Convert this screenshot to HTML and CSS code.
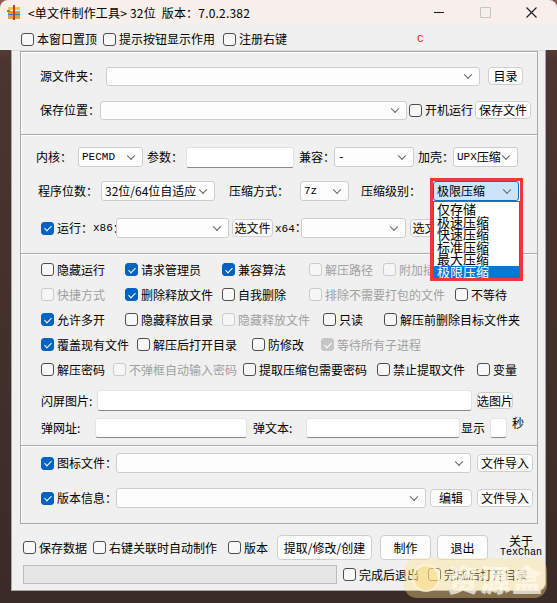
FILE: index.html
```html
<!DOCTYPE html>
<html lang="zh-CN">
<head>
<meta charset="utf-8">
<title>单文件制作工具</title>
<link rel="stylesheet" href="styles.css">
</head>
<body>
<div class="window">
  <div class="titlebar">
    <svg class="appicon" width="14" height="15" viewBox="0 0 14 15">
      <rect x="1" y="2" width="12" height="3" fill="#f3c64f"/>
      <rect x="1" y="6" width="12" height="3" fill="#e8923a"/>
      <rect x="1" y="10" width="12" height="4" fill="#d8a443"/>
      <rect x="1" y="9" width="12" height="1" fill="#3d7bd6"/>
      <rect x="6" y="0" width="2" height="15" fill="#c43d2c"/>
      <rect x="0" y="5" width="3" height="2" fill="#4aa24a"/>
    </svg>
    <span class="title">&lt;单文件制作工具&gt; 32位&nbsp; 版本：7.0.2.382</span>
    <div class="controls">
      <span class="ctl"><i class="min"></i></span>
      <span class="ctl"><i class="max"></i></span>
      <span class="ctl"><svg width="11" height="11" viewBox="0 0 11 11"><path d="M0.5 0.5L10.5 10.5M10.5 0.5L0.5 10.5" stroke="#1a1a1a" stroke-width="1.1"/></svg></span>
    </div>
  </div>

  <div class="toprow">
    <label class="cb w82"><i></i>本窗口置顶</label>
    <label class="cb w120"><i></i>提示按钮显示作用</label>
    <label class="cb w194"><i></i>注册右键</label>
    <span class="mark">C</span>
  </div>

  <div class="main">
    <div class="grp g1">
      <div class="row r-src">
        <span class="lbl w66">源文件夹：</span>
        <div class="combo h19 w374"></div>
        <button class="btn w35 ml8">目录</button>
      </div>
      <div class="row r-save">
        <span class="lbl w60">保存位置：</span>
        <div class="combo h19 w307"></div>
        <label class="cb ml2 w66"><i></i>开机运行</label>
        <button class="btn w56">保存文件</button>
      </div>
    </div>

    <div class="grp g2">
      <div class="row r-core">
        <span class="lbl w42">内核：</span>
        <div class="combo w65"><span class="mono">PECMD</span></div>
        <span class="lbl ml4 w39">参数：</span>
        <div class="input w108"></div>
        <span class="lbl ml5 w35">兼容：</span>
        <div class="combo w80"><span class="mono">-</span></div>
        <span class="lbl ml4 w35">加壳：</span>
        <div class="combo w65"><span class="mono">UPX</span>压缩</div>
      </div>
      <div class="row r-bits">
        <span class="lbl w63">程序位数：</span>
        <div class="combo w114">32位/64位自适应</div>
        <span class="lbl ml14 w71">压缩方式：</span>
        <div class="combo w49"><span class="mono">7z</span></div>
        <span class="lbl ml12 w72">压缩级别：</span>
        <div class="combo sel w86">极限压缩</div>
      </div>
      <div class="row r-run">
        <label class="cb on w75"><i></i>运行：<span class="mono">x86</span>：</label>
        <div class="combo w113"></div>
        <button class="btn ml3 w41">选文件</button>
        <span class="lbl ml2 w26"><span class="mono">x64</span>：</span>
        <div class="combo w105"></div>
        <button class="btn ml4 w41">选文件</button>
      </div>
      <div class="sep"></div>
      <div class="checks">
        <div class="crow">
          <label class="cb w84"><i></i>隐藏运行</label>
          <label class="cb on w97"><i></i>请求管理员</label>
          <label class="cb on w87"><i></i>兼容算法</label>
          <label class="cb off w74"><i></i>解压路径</label>
          <label class="cb off"><i></i>附加插件</label>
        </div>
        <div class="crow">
          <label class="cb off w84"><i></i>快捷方式</label>
          <label class="cb on w97"><i></i>删除释放文件</label>
          <label class="cb w87"><i></i>自我删除</label>
          <label class="cb off w146"><i></i>排除不需要打包的文件</label>
          <label class="cb"><i></i>不等待</label>
        </div>
        <div class="crow">
          <label class="cb on w84"><i></i>允许多开</label>
          <label class="cb w97"><i></i>隐藏释放目录</label>
          <label class="cb off w101"><i></i>隐藏释放文件</label>
          <label class="cb w61"><i></i>只读</label>
          <label class="cb"><i></i>解压前删除目标文件夹</label>
        </div>
        <div class="crow">
          <label class="cb on w96"><i></i>覆盖现有文件</label>
          <label class="cb w115"><i></i>解压后打开目录</label>
          <label class="cb w69"><i></i>防修改</label>
          <label class="cb off on"><i></i>等待所有子进程</label>
        </div>
        <div class="crow">
          <label class="cb w72"><i></i>解压密码</label>
          <label class="cb off w130"><i></i>不弹框自动输入密码</label>
          <label class="cb w134"><i></i>提取压缩包需要密码</label>
          <label class="cb w100"><i></i>禁止提取文件</label>
          <label class="cb"><i></i>变量</label>
        </div>
      </div>
      <div class="row r-splash">
        <span class="lbl w56">闪屏图片:</span>
        <div class="input w375"></div>
        <button class="btn ml5 w36 h17">选图片</button>
      </div>
      <div class="row r-url">
        <span class="lbl w54">弹网址:</span>
        <div class="input h20 w152"></div>
        <span class="lbl ml6 w53">弹文本:</span>
        <div class="input h20 w154"></div>
        <span class="lbl ml1 w29">显示</span>
        <div class="input h20 w17"></div>
        <span class="lbl ml5 sec">秒</span>
      </div>
    </div>

    <div class="grp g3">
      <div class="row r-icon">
        <label class="cb on w75"><i></i>图标文件：</label>
        <div class="combo w355"></div>
        <button class="btn ml6 w56">文件导入</button>
      </div>
      <div class="row r-ver">
        <label class="cb on w75"><i></i>版本信息：</label>
        <div class="combo w310"></div>
        <button class="btn ml4 w42">编辑</button>
        <button class="btn ml5 w56">文件导入</button>
      </div>
    </div>

    <div class="row r-bottom">
      <label class="cb w70"><i></i>保存数据</label>
      <label class="cb w135"><i></i>右键关联时自动制作</label>
      <label class="cb w49"><i></i>版本</label>
      <button class="btn big w95">提取/修改/创建</button>
      <button class="btn big ml8 w51">制作</button>
      <button class="btn big ml6 w51">退出</button>
      <div class="about">
        <span>关于</span>
        <span class="tex">TexChan</span>
      </div>
    </div>
    <div class="row r-progress">
      <div class="progress"></div>
      <label class="cb ml6 w85"><i></i>完成后退出</label>
      <label class="cb"><i></i>完成后打开目录</label>
    </div>
  </div>

  <div class="droplist">
    <div class="item">仅存储</div>
    <div class="item">极速压缩</div>
    <div class="item">快速压缩</div>
    <div class="item">标准压缩</div>
    <div class="item">最大压缩</div>
    <div class="item cur">极限压缩</div>
  </div>
  <div class="redframe"></div>

  <div class="wm">
    <span class="wm-logo"></span>
    <span class="wm-text">资源盒</span>
  </div>
</div>
</body>
</html>
```

FILE: styles.css
```css
html, body {
  margin: 0;
  padding: 0;
  width: 557px;
  height: 603px;
  overflow: hidden;
}
body {
  background: linear-gradient(180deg, #8d5b50 0, #4b3530 60px, #3a2b27 100%);
  font-family: "Noto Sans CJK SC", "Noto Sans", sans-serif;
  font-size: 12px;
  line-height: 16px;
  color: #000;
}
.window {
  position: relative;
  width: 557px;
  height: 603px;
}

/* title bar */
.titlebar {
  height: 25px;
  background: #f7efeb;
  border-radius: 8px 8px 0 0;
  display: flex;
  align-items: center;
}
.appicon {
  margin-left: 7px;
  flex: none;
}
.title {
  margin-left: 7px;
  font-size: 12px;
  letter-spacing: 0.2px;
  white-space: nowrap;
}
.controls {
  margin-left: auto;
  margin-right: 3px;
  display: flex;
}
.ctl {
  width: 46px;
  height: 25px;
  display: flex;
  align-items: center;
  justify-content: center;
}
.ctl .min {
  width: 10px;
  height: 1px;
  background: #1a1a1a;
}
.ctl .max {
  width: 9px;
  height: 9px;
  border: 1px solid #c4c4c4;
  border-radius: 1px;
}

/* top options row */
.toprow {
  height: 25px;
  box-sizing: border-box;
  padding: 3px 0 0 21px;
  background: #f0f0f0;
  display: flex;
  align-items: center;
}
.mark {
  font-family: "Liberation Mono", monospace;
  font-size: 11px;
  color: #ff1010;
}

/* main client panel */
.main {
  margin-left: 11px;
  width: 535px;
  height: 541px;
  box-sizing: border-box;
  border: 1px solid #a7a7a7;
  border-top-color: #dcdcdc;
  border-radius: 0 0 8px 0;
  background: #f0f0f0;
  padding: 0 7px 0 8px;
}
.grp {
  box-sizing: border-box;
  border: 1px solid #a9a9a9;
  box-shadow: inset 1px 1px 0 #ffffff;
}
.g1 { height: 84px; }
.g2 { height: 312px; margin-top: -1px; }
.g3 { height: 79px; margin-top: -1px; }

.row {
  display: flex;
  align-items: center;
}
.r-src { margin-top: 14px; height: 20px; padding-left: 19px; }
.r-save { margin-top: 14px; height: 20px; padding-left: 19px; }
.r-core { margin-top: 12px; height: 20px; padding-left: 15px; }
.r-bits { margin-top: 14px; height: 20px; padding-left: 17px; }
.r-run { margin-top: 17px; height: 20px; padding-left: 20px; }
.r-splash { margin-top: 8px; height: 21px; padding-left: 20px; }
.r-url { margin-top: 7px; height: 20px; padding-left: 20px; }
.r-icon { margin-top: 7px; height: 20px; padding-left: 20px; }
.r-ver { margin-top: 15px; height: 20px; padding-left: 20px; }
.r-bottom { margin-top: 11px; height: 25px; padding-left: 3px; }
.r-progress { margin-top: 5px; height: 19px; padding-left: 3px; }

.sep {
  margin-top: 15px;
  border-top: 1px solid #a9a9a9;
  border-bottom: 1px solid #ffffff;
}
.checks {
  margin-top: 2px;
  padding-left: 20px;
}
.crow {
  height: 25px;
  display: flex;
  align-items: center;
}

.lbl {
  flex: none;
  white-space: nowrap;
}
.sec {
  align-self: flex-start;
  margin-top: -3px;
}
.mono {
  font-family: "Liberation Mono", "DejaVu Sans Mono", monospace;
  font-size: 11px;
}

/* checkbox */
.cb {
  display: flex;
  align-items: center;
  flex: none;
  white-space: nowrap;
}
.cb i {
  position: relative;
  flex: none;
  width: 13px;
  height: 13px;
  box-sizing: border-box;
  margin-right: 3px;
  border: 1px solid #4e4e4e;
  border-radius: 3px;
  background: #f8f8f8;
}
.cb.on i {
  background: #0062c1;
  border-color: #0062c1;
}
.cb.on i::after {
  content: "";
  position: absolute;
  left: 3.5px;
  top: 1.5px;
  width: 3px;
  height: 6px;
  border-right: 1.3px solid #fff;
  border-bottom: 1.3px solid #fff;
  transform: rotate(45deg);
}
.cb.off {
  color: #a0a0a0;
}
.cb.off i {
  border-color: #cbcbcb;
  background: #f6f6f6;
}
.cb.off.on i {
  background: #c6c6c6;
  border-color: #c6c6c6;
}

/* combo box */
.combo {
  position: relative;
  flex: none;
  height: 20px;
  box-sizing: border-box;
  border: 1px solid #cdcdcd;
  border-radius: 3px;
  background: #fdfdfd;
  display: flex;
  align-items: center;
  padding-left: 3px;
  white-space: nowrap;
}
.combo::after {
  content: "";
  position: absolute;
  right: 8px;
  top: 50%;
  width: 5px;
  height: 5px;
  border-right: 1px solid #666;
  border-bottom: 1px solid #666;
  transform: translateY(-70%) rotate(45deg);
}
.combo.h19 { height: 19px; }
.combo.sel {
  background: #cce4f7;
  border-color: #0b6fc8;
}

/* text box */
.input {
  flex: none;
  height: 21px;
  box-sizing: border-box;
  background: #ffffff;
  border: 1px solid #e4e4e4;
  border-bottom-color: #8a8a8a;
  border-radius: 3px;
}
.input.h20 { height: 20px; }

/* button */
.btn {
  flex: none;
  height: 18px;
  box-sizing: border-box;
  margin: 0;
  padding: 0;
  border: 1px solid #cfcfcf;
  border-radius: 4px;
  background: #fdfdfd;
  font: inherit;
  color: #000;
  display: flex;
  align-items: center;
  justify-content: center;
  white-space: nowrap;
}
.btn.h17 { height: 17px; }
.btn.big { height: 25px; }

.about {
  flex: none;
  margin-left: 8px;
  width: 50px;
  display: flex;
  flex-direction: column;
  align-items: center;
  line-height: 12px;
  margin-top: -1px;
}
.about .tex {
  font-family: "Liberation Mono", monospace;
  font-size: 10px;
}

.progress {
  flex: none;
  width: 314px;
  height: 19px;
  box-sizing: border-box;
  border: 1px solid #bcbcbc;
  background: #e6e6e6;
}

/* dropdown overlay */
.droplist {
  position: absolute;
  left: 433px;
  top: 201px;
  width: 87px;
  height: 77px;
  box-sizing: border-box;
  background: #ffffff;
  border: 1px solid #646464;
  padding-top: 1px;
  font-size: 13px;
}
.droplist .item {
  height: 12.5px;
  line-height: 12.5px;
  padding-left: 3px;
  white-space: nowrap;
}
.droplist .item.cur {
  background: #0078d7;
  color: #fff;
}
.redframe {
  position: absolute;
  left: 430px;
  top: 178px;
  width: 93px;
  height: 103px;
  box-sizing: border-box;
  border: 3px solid #f03838;
}

/* watermark overlay */
.wm {
  position: absolute;
  left: 404px;
  top: 558px;
  width: 143px;
  height: 40px;
  box-sizing: border-box;
  border-radius: 13px;
  background: rgba(255, 226, 140, 0.38);
  display: flex;
  align-items: center;
  padding-left: 8px;
}
.wm-logo {
  width: 24px;
  height: 24px;
  border-radius: 50%;
  border: 2px solid rgba(255, 255, 255, 0.6);
  background: rgba(250, 215, 120, 0.5);
  flex: none;
}
.wm-text {
  margin-left: 8px;
  font-size: 30px;
  line-height: 38px;
  font-weight: 900;
  letter-spacing: 2px;
  color: rgba(255, 251, 238, 0.72);
}

/* widths and spacings */
.w17 { width: 17px; } .w26 { width: 26px; } .w29 { width: 29px; }
.w35 { width: 35px; } .w36 { width: 36px; } .w39 { width: 39px; }
.w41 { width: 41px; } .w42 { width: 42px; } .w49 { width: 49px; }
.w51 { width: 51px; } .w53 { width: 53px; } .w54 { width: 54px; }
.w56 { width: 56px; } .w60 { width: 60px; } .w61 { width: 61px; }
.w63 { width: 63px; } .w65 { width: 65px; } .w66 { width: 66px; }
.w69 { width: 69px; } .w70 { width: 70px; } .w71 { width: 71px; }
.w72 { width: 72px; } .w74 { width: 74px; } .w75 { width: 75px; }
.w80 { width: 80px; } .w82 { width: 82px; } .w84 { width: 84px; }
.w85 { width: 85px; } .w86 { width: 86px; } .w87 { width: 87px; }
.w95 { width: 95px; } .w96 { width: 96px; } .w97 { width: 97px; }
.w100 { width: 100px; } .w101 { width: 101px; } .w105 { width: 105px; }
.w108 { width: 108px; } .w113 { width: 113px; } .w114 { width: 114px; }
.w115 { width: 115px; } .w120 { width: 120px; } .w130 { width: 130px; }
.w134 { width: 134px; } .w135 { width: 135px; } .w146 { width: 146px; }
.w152 { width: 152px; } .w154 { width: 154px; } .w194 { width: 194px; }
.w307 { width: 307px; } .w310 { width: 310px; } .w355 { width: 355px; }
.w374 { width: 374px; } .w375 { width: 375px; }
.ml1 { margin-left: 1px; } .ml2 { margin-left: 2px; } .ml3 { margin-left: 3px; }
.ml4 { margin-left: 4px; } .ml5 { margin-left: 5px; } .ml6 { margin-left: 6px; }
.ml8 { margin-left: 8px; } .ml12 { margin-left: 12px; } .ml14 { margin-left: 14px; }
```
